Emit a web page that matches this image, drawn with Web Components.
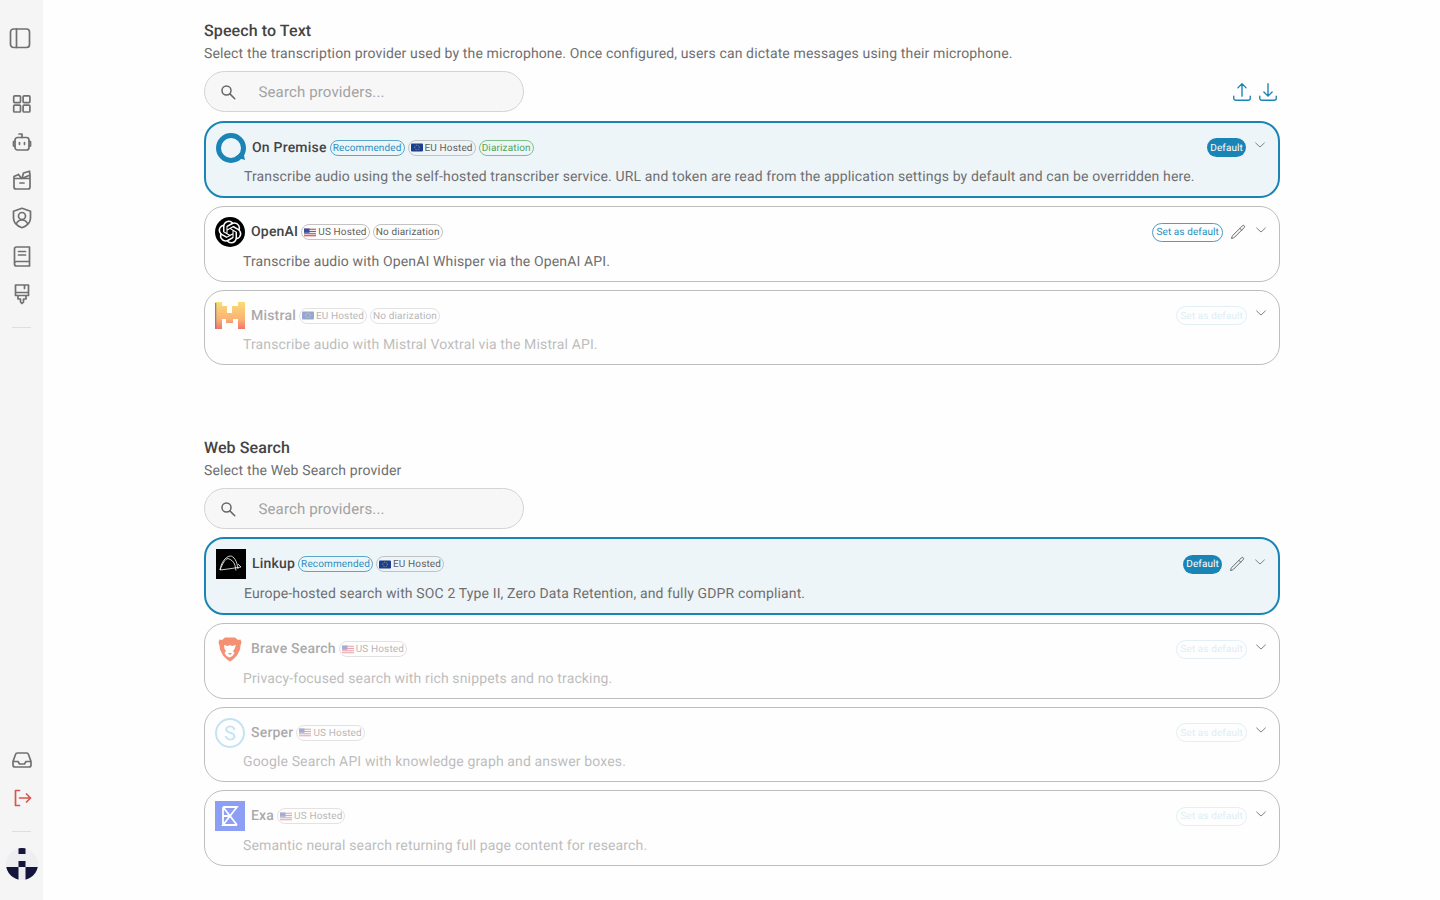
<!DOCTYPE html>
<html lang="en"><head><meta charset="utf-8"><title>Providers</title>
<style>
html,body{margin:0;height:900px;overflow:hidden;background:#fefefe;font-family:Roboto,"Liberation Sans",sans-serif;color:#333;text-rendering:geometricPrecision}
body{display:flex}
main{flex:1;min-width:0;display:flex;flex-direction:column;align-items:center;padding-top:21px;padding-left:1px}
</style></head><body>
<app-sidebar></app-sidebar>
<main>
<provider-section heading="Speech to Text" sub="Select the transcription provider used by the microphone. Once configured, users can dictate messages using their microphone." actions>
  <provider-card logo="onprem" name="On Premise" chips="rec eu diar" state="default" desc="Transcribe audio using the self-hosted transcriber service. URL and token are read from the application settings by default and can be overridden here."></provider-card>
  <provider-card logo="openai" name="OpenAI" chips="us nodiar" state="set" edit desc="Transcribe audio with OpenAI Whisper via the OpenAI API."></provider-card>
  <provider-card logo="mistral" name="Mistral" chips="eu nodiar" state="set" disabled desc="Transcribe audio with Mistral Voxtral via the Mistral API."></provider-card>
</provider-section>
<provider-section style="margin-top:72.6px" heading="Web Search" sub="Select the Web Search provider">
  <provider-card logo="linkup" name="Linkup" chips="rec eu" state="default" edit desc="Europe-hosted search with SOC 2 Type II, Zero Data Retention, and fully GDPR compliant."></provider-card>
  <provider-card logo="brave" name="Brave Search" chips="us" state="set" disabled desc="Privacy-focused search with rich snippets and no tracking."></provider-card>
  <provider-card logo="serper" name="Serper" chips="us" state="set" disabled desc="Google Search API with knowledge graph and answer boxes."></provider-card>
  <provider-card logo="exa" name="Exa" chips="us" state="set" disabled desc="Semantic neural search returning full page content for research."></provider-card>
</provider-section>
</main>
<script>
const ICONS={
panel:'<rect x="2.5" y="3" width="19" height="18.500" rx="3"/><path d="M8.500 3v18.500"/>',
grid:'<rect x="3.700" y="3.800" width="6.800" height="6.800" rx="1"/><rect x="13.100" y="3.800" width="6.800" height="6.800" rx="1"/><rect x="3.700" y="13.200" width="6.800" height="6.800" rx="1"/><rect x="13.100" y="13.200" width="6.800" height="6.800" rx="1"/>',
robot:'<rect x="5" y="7.500" width="14" height="12.500" rx="2.500"/><path d="M12 7.500V4H9M5 11.500H3.500v4.500H5M19 11.500h1.500v4.500H19M9.500 12.500v1.800M14.500 12.500v1.800"/>',
box:'<path d="M4 10.500h16V19a2 2 0 0 1-2 2H6a2 2 0 0 1-2-2zM4 10.500V8.500l4.500-2M20 10.500V7M10 15h4M8.500 6.500l3 4M12 10.500l1.500-5.500 6-1.800.5 3.800z"/>',
shield:'<path d="M12 2.300l8.500 3v6.700c0 4.600-3.600 8-8.500 9.700-4.900-1.700-8.500-5.100-8.500-9.700V5.300z"/><circle cx="12" cy="10" r="3.500"/><path d="M6.500 17.500c1-2.200 3.200-3.500 5.500-3.500s4.500 1.300 5.500 3.500"/>',
book:'<path d="M4.500 18.500V5a2 2 0 0 1 2-2h13v19h-13a2 2 0 0 1-2-2zM4.500 19.500a2 2 0 0 1 2-2h13M8.500 7.500h7M8.500 11h7"/>',
brush:'<path d="M5.500 3h13v10.500h-13zM5.500 10.500h13M8 13.500v3.500h2.500v3l1.500 1.500 1.500-1.500v-3H16v-3.500M14.500 3v3.500"/>',
inbox:'<path d="M3 13.500V17a2 2 0 0 0 2 2h14a2 2 0 0 0 2-2v-3.500l-2.500-7A2 2 0 0 0 16.600 5H7.400a2 2 0 0 0-1.900 1.500zM3 13.500h5l1.500 2.500h5l1.500-2.500h5"/>',
logout:'<path d="M9.500 4.500H5.500v15h4M9.500 12H20.500M16.500 8l4 4-4 4"/>',
upload:'<path d="M3 16.500v2.250A2.250 2.250 0 0 0 5.250 21h13.500A2.250 2.250 0 0 0 21 18.750V16.500m-13.500-9L12 3m0 0l4.500 4.500M12 3v13.500"/>',
download:'<path d="M3 16.500v2.250A2.250 2.250 0 0 0 5.250 21h13.500A2.250 2.250 0 0 0 21 18.750V16.500M16.500 12L12 16.500m0 0L7.500 12m4.500 4.500V3"/>',
pencil:'<path d="M16.860 4.490l1.690-1.690a1.880 1.880 0 1 1 2.650 2.650L6.830 19.820a4.500 4.500 0 0 1-1.900 1.130l-2.680.8.8-2.680a4.500 4.500 0 0 1 1.130-1.900zM14.800 6.500l2.700 2.700"/>',
chevron:'<path d="M4.500 8.500l7.500 7 7.500-7"/>',
search:'<circle cx="10" cy="10" r="6"/><path d="M14.500 14.500L21 21"/>'
};
const svg=(n,s,sw,c)=>`<svg width="${s}" height="${s}" viewBox="0 0 24 24" fill="none" stroke="${c||'currentColor'}" stroke-width="${sw}" stroke-linecap="round" stroke-linejoin="round" aria-hidden="true">${ICONS[n]}</svg>`;

class AppSidebar extends HTMLElement{constructor(){super();const r=this.attachShadow({mode:'open'});
const item=(n,c)=>`<div class="i" style="${c?'color:'+c:''}">${svg(n,24,1.7)}</div>`;
r.innerHTML=`<style>
:host{display:flex;flex-direction:column;width:43px;height:900px;background:#f5f5f5;flex:none;color:#707070;box-sizing:border-box;padding-top:19px;padding-bottom:19px}
.i{height:38px;display:flex;align-items:center;justify-content:center}
.p{margin-left:-3px}
.nav{margin-top:28px}
.d{height:1px;width:19px;background:#dedede;margin:14px auto 0;flex:none}
.b{margin-top:auto}
.logo{margin:15px auto 0;display:block}
</style>
<div class="i p">${svg('panel',24,1.7)}</div>
<div class="nav">${['grid','robot','box','shield','book','brush'].map(n=>item(n)).join('')}</div>
<div class="d"></div>
<div class="b">${item('inbox')}${item('logout','#d9564e')}</div>
<div class="d" style="margin-top:14px"></div>
<svg class="logo" width="34" height="34" viewBox="0 0 34 34" aria-hidden="true"><defs><clipPath id="c"><circle cx="17" cy="17" r="16"/></clipPath></defs><circle cx="17" cy="17" r="16" fill="#eeeef1"/><g clip-path="url(#c)" fill="#14143c"><rect x="13.500" y="1" width="7" height="6"/><rect x="13.500" y="14" width="7" height="6"/><rect x="0" y="20" width="13.500" height="14"/><rect x="20.500" y="20" width="14" height="14"/></g></svg>`;}}
customElements.define('app-sidebar',AppSidebar);

class ProviderSearch extends HTMLElement{constructor(){super();const r=this.attachShadow({mode:'open'});
r.innerHTML=`<style>
:host{display:flex;align-items:center;width:320px;height:41.2px;box-sizing:border-box;border:1px solid #d4d4d4;border-radius:21px;background:#f7f7f7;padding-left:14px;color:#a3a3a3;font-size:15px;letter-spacing:.13px}
svg{flex:none;color:#666;margin-right:21.500px}
</style>${svg('search',18,2)}<span>Search providers...</span>`;}}
customElements.define('provider-search',ProviderSearch);

const FLAG={eu:'<svg width="12" height="9" viewBox="0 0 12 9"><rect width="12" height="8" y=".5" rx="1" fill="#1b3d92"/><circle cx="6" cy="4.500" r="2.300" fill="none" stroke="#e8d24a" stroke-width=".7" stroke-dasharray=".7 .8"/></svg>',
us:'<svg width="12" height="9" viewBox="0 0 12 9"><rect width="12" height="8" y=".5" rx="1" fill="#eee"/><path d="M0 1.200h12M0 3.500h12M0 5.800h12M0 7.800h12" stroke="#d8384a" stroke-width="1.100"/><rect width="5.500" height="4.300" y=".5" fill="#3a4f9a"/></svg>'};
class ProviderChip extends HTMLElement{constructor(){super();const r=this.attachShadow({mode:'open'});
const k=this.getAttribute('kind');
const map={rec:['Recommended','#2a8fbd','#5aa6c9'],eu:['EU Hosted','#5f5f5f','#c2c2c2',FLAG.eu],us:['US Hosted','#5f5f5f','#c2c2c2',FLAG.us],diar:['Diarization','#4aa65a','#7fc08a'],nodiar:['No diarization','#5f5f5f','#c2c2c2']};
const [t,c,b,f]=map[k];
r.innerHTML=`<style>
:host{display:inline-flex;align-items:center;gap:2px;height:16px;box-sizing:border-box;padding:0 2px;border:1px solid ${b};border-radius:8px;color:${c};font-size:10px;letter-spacing:.14px;white-space:nowrap;flex:none}
svg{display:block}
span{padding-top:1px}
</style>${f||''}<span>${t}</span>`;}}
customElements.define('provider-chip',ProviderChip);

const LOGOS={
onprem:'<svg width="30" height="30" viewBox="0 0 30 30"><circle cx="15" cy="15" r="12.500" fill="none" stroke="#1a85b4" stroke-width="5"/><path d="M19 24l10 3-2-9z" fill="#1a85b4"/></svg>',
openai:'<svg width="30" height="30" viewBox="0 0 30 30"><circle cx="15" cy="15" r="15" fill="#000"/><g transform="translate(3.500 3.500) scale(.958)"><path fill="#fff" d="M22.2819 9.8211a5.9847 5.9847 0 0 0-.5157-4.9108 6.0462 6.0462 0 0 0-6.5098-2.9A6.0651 6.0651 0 0 0 4.9807 4.1818a5.9847 5.9847 0 0 0-3.9977 2.9 6.0462 6.0462 0 0 0 .7427 7.0966 5.98 5.98 0 0 0 .511 4.9107 6.051 6.051 0 0 0 6.5146 2.9001A5.9847 5.9847 0 0 0 13.2599 24a6.0557 6.0557 0 0 0 5.7718-4.2058 5.9894 5.9894 0 0 0 3.9977-2.9001 6.0557 6.0557 0 0 0-.7475-7.0729zm-9.022 12.6081a4.4755 4.4755 0 0 1-2.8764-1.0408l.1419-.0804 4.7783-2.7582a.7948.7948 0 0 0 .3927-.6813v-6.7369l2.02 1.1686a.071.071 0 0 1 .038.052v5.5826a4.504 4.504 0 0 1-4.4945 4.4944zm-9.6607-4.1254a4.4708 4.4708 0 0 1-.5346-3.0137l.142.0852 4.783 2.7582a.7712.7712 0 0 0 .7806 0l5.8428-3.3685v2.3324a.0804.0804 0 0 1-.0332.0615L9.74 19.9502a4.4992 4.4992 0 0 1-6.1408-1.6464zM2.3408 7.8956a4.485 4.485 0 0 1 2.3655-1.9728V11.6a.7664.7664 0 0 0 .3879.6765l5.8144 3.3543-2.0201 1.1685a.0757.0757 0 0 1-.071 0l-4.8303-2.7865A4.504 4.504 0 0 1 2.3408 7.872zm16.5963 3.8558L13.1038 8.364 15.1192 7.2a.0757.0757 0 0 1 .071 0l4.8303 2.7913a4.4944 4.4944 0 0 1-.6765 8.1042v-5.6772a.79.79 0 0 0-.407-.667zm2.0107-3.0231l-.142-.0852-4.7735-2.7818a.7759.7759 0 0 0-.7854 0L9.409 9.2297V6.8974a.0662.0662 0 0 1 .0284-.0615l4.8303-2.7866a4.4992 4.4992 0 0 1 6.6802 4.66zM8.3065 12.863l-2.02-1.1638a.0804.0804 0 0 1-.038-.0567V6.0742a4.4992 4.4992 0 0 1 7.3757-3.4537l-.142.0805L8.704 5.459a.7948.7948 0 0 0-.3927.6813zm1.0976-2.3654l2.602-1.4998 2.6069 1.4998v2.9994l-2.5974 1.4997-2.6067-1.4997Z"/></g></svg>',
mistral:'<svg width="30" height="30" viewBox="0 0 30 30"><defs><linearGradient id="m" gradientUnits="userSpaceOnUse" x1="0" y1="1" x2="0" y2="28"><stop offset="0" stop-color="#f9cf3c"/><stop offset=".65" stop-color="#f8913a"/><stop offset="1" stop-color="#ee3a2e"/></linearGradient></defs><path fill="url(#m)" d="M0 1h7v27H0zM6 5h6v13H6zM11 12h7v10h-7zM17 5h6v13h-6zM23 1h7v27h-7z"/><rect x="0" y="2" width="1.300" height="26" fill="#555"/></svg>',
linkup:'<svg width="30" height="30" viewBox="0 0 30 30"><rect width="30" height="30" fill="#000"/><path d="M4 21C5 14 9 8 14 7c4 0 7 5 8 13M4 21C7 14 9 10 12 9.500c3 1 6 3 7 7l1 5M4 21l8-1 13-2-3-3" fill="none" stroke="#fff" stroke-width=".8"/></svg>',
brave:'<svg width="30" height="30" viewBox="0 0 30 30"><path d="M10 3.500h10l3 2.500 2.500-.5 1 3-1 3-.5 4-3 6-4 4-3 2-3-2-4-4-3-6-.5-4-1-3 1-3 2.500.5z" fill="#f0633a"/><path d="M9 11l4 1 2-1 2 1 4-1-1.500 4-1.500 2 1.500 2-2 3-3 1.500-3-1.500-2-3 1.500-2-1.500-2z" fill="#fff"/><path d="M13 19h4l-2 2z" fill="#f0633a"/></svg>',
serper:'<svg width="30" height="30" viewBox="0 0 30 30"><circle cx="15" cy="15" r="14" fill="#fff" stroke="#7cc4ec" stroke-width="2"/><text x="15" y="22" text-anchor="middle" font-family="Roboto,sans-serif" font-size="20" fill="#7cc4ec">S</text></svg>',
exa:'<svg width="30" height="30" viewBox="0 0 30 30"><rect width="30" height="30" fill="#1f40ed"/><path d="M8 6h14L8 24h14M8 6v18M8 6l14 18M8 15h7" fill="none" stroke="#fff" stroke-width="1.800"/></svg>'
};
const LOGO_FADE={mistral:.7,brave:.7,serper:.45,exa:.5};
class ProviderCard extends HTMLElement{constructor(){super();const r=this.attachShadow({mode:'open'});
const g=a=>this.getAttribute(a);const def=g('state')==='default';const dis=this.hasAttribute('disabled');
const chips=g('chips').split(' ').map(k=>`<provider-chip kind="${k}"></provider-chip>`).join('');
r.innerHTML=`<style>
:host{display:block;box-sizing:border-box;border:${def?'2px solid #1a85b4':'1px solid #bdbdbd'};border-radius:20px;background:${def?'#eef5f9':'#fefefe'};padding:10px 10px 8.400px;color:#333}
.top{display:flex;align-items:flex-start;height:30px}
.logo{width:30px;height:30px;flex:none;margin-right:6px}
.logo svg{display:block}
.name{font-size:14px;font-weight:500;letter-spacing:.2px;color:#444;margin-right:3px;line-height:31.500px;height:30px}
.chips{display:flex;gap:3px;height:30px;align-items:center}
.right{margin-left:auto;display:flex;align-items:center;height:30px;margin-right:1px}
.pill{height:19px;box-sizing:border-box;border-radius:10px;font-size:10px;letter-spacing:.1px;display:flex;align-items:center;padding:1px 3px 0;white-space:nowrap}
.pill.d{background:#1a85b4;color:#fff}
.pill.s{border:1px solid #4a9fc4;color:#2a8fbd}
.edit{width:16px;height:16px;margin:0 1px 0 7px;color:#666;display:flex}
.chev{margin-left:7px;margin-top:-5px;color:#777;display:flex}
.desc{margin:5.600px 0 0 28px;font-size:14px;line-height:19.6px;letter-spacing:.14px;color:#6f6f6f}
.f{opacity:.45}
.ff{opacity:.15}
</style>
<div class="top"><div class="logo" style="opacity:${dis?LOGO_FADE[g('logo')]:1}">${LOGOS[g('logo')]}</div><div class="name ${dis?'f':''}">${g('name')}</div><div class="chips ${dis?'f':''}">${chips}</div>
<div class="right"><div class="pill ${def?'d':'s'} ${dis?'ff':''}">${def?'Default':'Set as default'}</div>${this.hasAttribute('edit')?`<div class="edit">${svg('pencil',16,1.5)}</div>`:''}<div class="chev">${svg('chevron',14,1.6)}</div></div></div>
<div class="desc ${dis?'f':''}">${g('desc')}</div>`;}}
customElements.define('provider-card',ProviderCard);

class ProviderSection extends HTMLElement{constructor(){super();const r=this.attachShadow({mode:'open'});
const act=this.hasAttribute('actions');
r.innerHTML=`<style>
:host{display:block;width:1076px;flex:none}
h2{margin:0;font-size:16px;line-height:20px;font-weight:500;letter-spacing:.1px;color:#444}
p{margin:3px 0 0;font-size:14px;line-height:20px;letter-spacing:.14px;color:#6f6f6f}
.bar{display:flex;align-items:center;justify-content:space-between;margin-top:7px}
.acts{display:flex;gap:4px;color:#1a85b4;margin-right:1px}
.list{display:flex;flex-direction:column;gap:8px;margin-top:8.400px}
</style><h2>${this.getAttribute('heading')}</h2><p>${this.getAttribute('sub')}</p>
<div class="bar"><provider-search></provider-search>${act?`<div class="acts">${svg('upload',22,1.5)}${svg('download',22,1.5)}</div>`:''}</div>
<div class="list"><slot></slot></div>`;}}
customElements.define('provider-section',ProviderSection);
</script>
</body></html>
